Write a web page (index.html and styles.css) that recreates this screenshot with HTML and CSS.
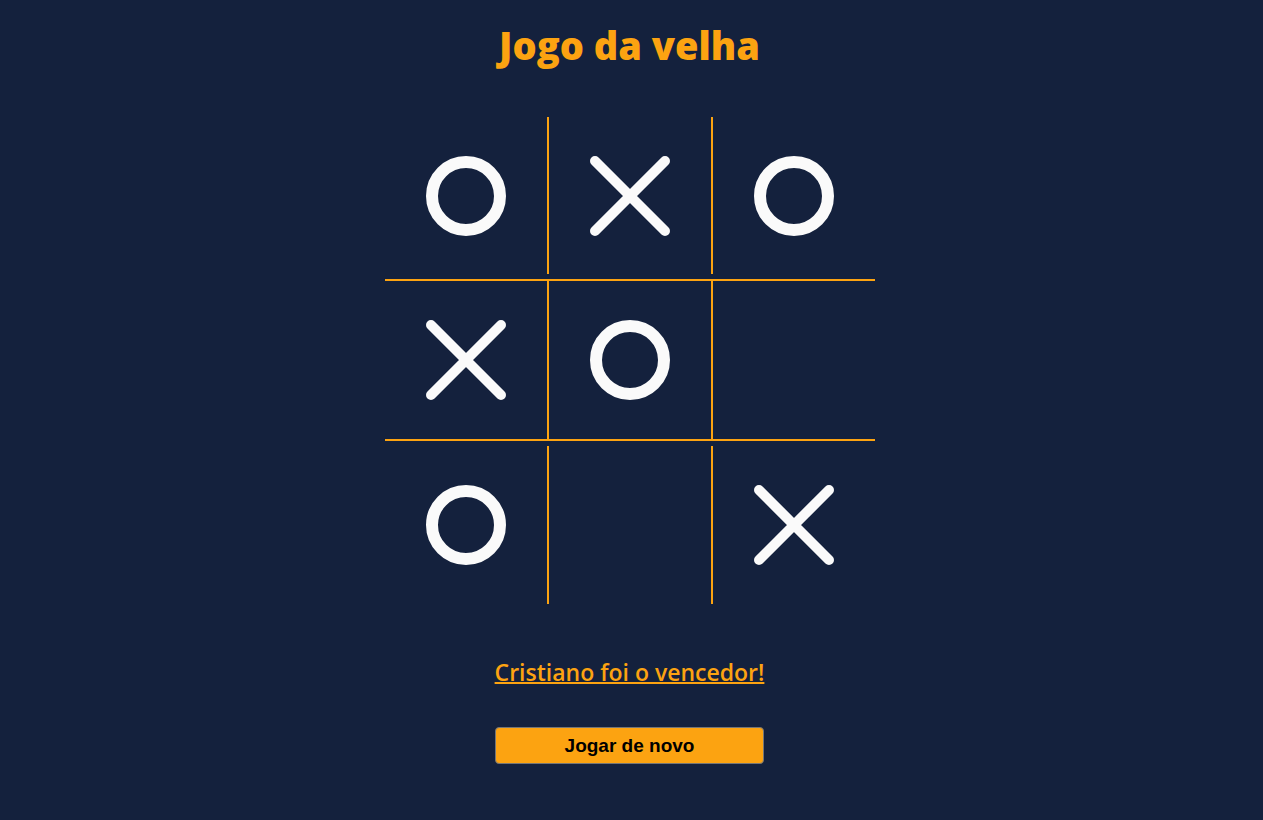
FILE: index.html
```html
<!DOCTYPE html>
<html lang="pt-BR">
<head>
<meta charset="utf-8">
<title>Jogo da velha</title>
<link rel="stylesheet" href="styles.css">
</head>
<body>
<main class="app">
  <h1 class="title">Jogo da velha</h1>
  <div class="board">
    <div class="row row-top">
      <div class="cell"><svg class="mark" viewBox="0 0 80 80"><circle cx="40" cy="40" r="34"/></svg></div>
      <div class="cell"><svg class="mark" viewBox="0 0 80 80"><path d="M5 5 L75 75 M75 5 L5 75"/></svg></div>
      <div class="cell"><svg class="mark" viewBox="0 0 80 80"><circle cx="40" cy="40" r="34"/></svg></div>
    </div>
    <div class="row row-mid">
      <div class="cell"><svg class="mark" viewBox="0 0 80 80"><path d="M5 5 L75 75 M75 5 L5 75"/></svg></div>
      <div class="cell"><svg class="mark" viewBox="0 0 80 80"><circle cx="40" cy="40" r="34"/></svg></div>
      <div class="cell"></div>
    </div>
    <div class="row row-bottom">
      <div class="cell"><svg class="mark" viewBox="0 0 80 80"><circle cx="40" cy="40" r="34"/></svg></div>
      <div class="cell"></div>
      <div class="cell"><svg class="mark" viewBox="0 0 80 80"><path d="M5 5 L75 75 M75 5 L5 75"/></svg></div>
    </div>
  </div>
  <p class="winner">Cristiano foi o vencedor!</p>
  <button class="again" type="button">Jogar de novo</button>
</main>
</body>
</html>
```
FILE: styles.css
```css
html, body {
  margin: 0;
  background: #14213d;
}
body {
  font-family: "Open Sans", "Liberation Sans", sans-serif;
}
.app {
  display: flex;
  flex-direction: column;
  align-items: center;
  padding: 20px 4px 0 0;
}
.title {
  margin: 0;
  font-size: 38px;
  line-height: 50px;
  font-weight: 800;
  color: #fca311;
}
.board {
  margin-top: 47px;
  width: 490px;
}
.row {
  display: flex;
}
.row-top .cell { height: 157px; }
.row-mid {
  margin: 5px 0;
  border-top: 2px solid #fca311;
  border-bottom: 2px solid #fca311;
}
.row-mid .cell { height: 158px; }
.row-bottom .cell { height: 158px; }
.cell {
  width: 162px;
  display: flex;
  align-items: center;
  justify-content: center;
}
.cell + .cell {
  border-left: 2px solid #fca311;
}
.mark {
  width: 80px;
  height: 80px;
  fill: none;
  stroke: #fafafa;
}
.mark circle { stroke-width: 12; }
.mark path { stroke-width: 10; stroke-linecap: round; }
.winner {
  margin: 52px 0 0;
  font-size: 23px;
  line-height: 33px;
  font-weight: 600;
  color: #fca311;
  text-decoration: underline;
  text-decoration-thickness: 2px;
}
.again {
  margin-top: 38px;
  width: 269px;
  height: 37px;
  background: #fca311;
  border: 1px solid #767676;
  border-radius: 4px;
  font-family: "Liberation Sans", Arial, sans-serif;
  font-size: 19px;
  font-weight: 700;
  color: #000;
  padding: 1px 0 0;
}
```
